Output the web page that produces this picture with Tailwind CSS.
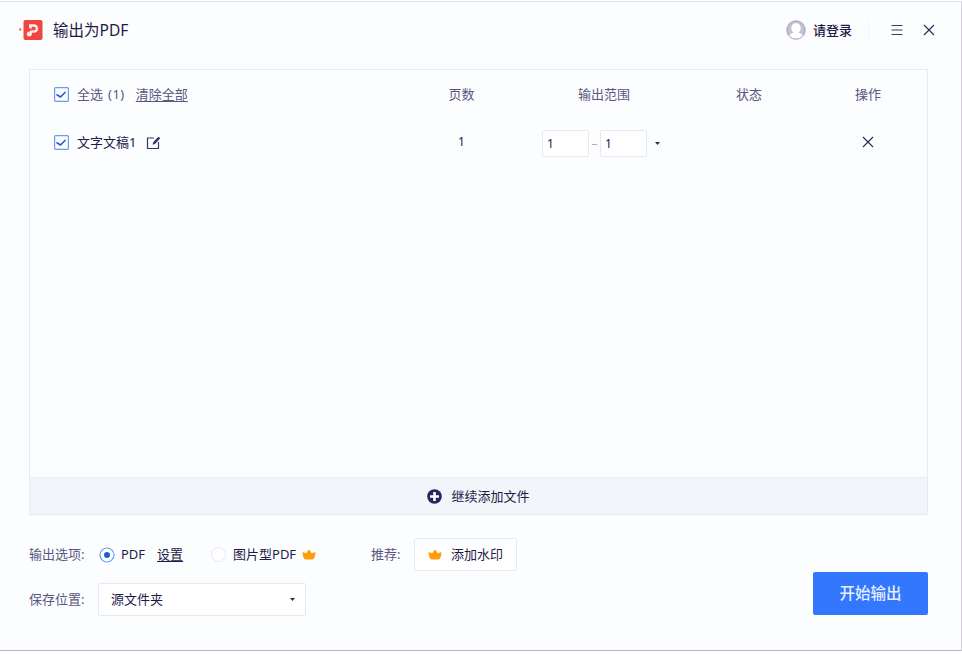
<!DOCTYPE html>
<html lang="zh-CN">
<head>
  <meta charset="UTF-8" />
  <title>输出为PDF</title>
  <meta name="viewport" content="width=device-width, initial-scale=1" />
  <script src="https://cdn.jsdelivr.net/npm/@tailwindcss/browser@4"></script>
</head>
<body class="bg-white overflow-hidden font-['Noto_Sans','Noto_Sans_CJK_SC',sans-serif] text-[13px] leading-none text-[#1f1a47]">
  <div class="w-[962px] h-[650px] mt-px flex flex-col bg-[#fcfdff] border-t border-r border-b border-t-[#dfe7ee] border-r-[#d9cfdc] border-b-[#b4b4c6]">

    <header class="h-[67px] shrink-0 flex items-center pl-[19px] pr-[26px] pb-[11px]">
      <svg class="w-[24px] h-[22px]" viewBox="0 0 24 22" fill="none">
        <circle cx="1.200" cy="10.500" r="1.200" fill="#ee6a60" />
        <rect x="4.500" y="1" width="19" height="20" rx="2" fill="#ee4540" />
        <path d="M10 6.500h5a3 3 0 0 1 0 6h-2.500L11 14.500M11.500 6v3.500" stroke="#ffe9e6" stroke-width="2.500" />
        <circle cx="10.300" cy="15" r="2.500" fill="#ffe9e6" />
      </svg>
      <h1 class="ml-[10px] mt-[2px] text-[15.5px]">输出为PDF</h1>
      <div class="ml-auto flex items-center">
        <svg class="w-5 h-5" viewBox="0 0 20 20" fill="none">
          <circle cx="10" cy="10" r="9.200" fill="#c3c0d3" />
          <path d="M2.500 15.500Q5 12.800 8 12.500h4q3 .3 5.500 3A9 9 0 0 1 2.500 15.500z" fill="#fff" />
          <ellipse cx="10" cy="8.300" rx="4.700" ry="5.300" fill="#fff" />
          <circle cx="10" cy="10" r="9.200" stroke="#a39fba" />
        </svg>
        <span class="ml-[7px] font-medium">请登录</span>
        <span class="ml-[16px] w-px h-5 bg-[#f3f4f9]"></span>
        <svg class="ml-[22px] w-3 h-3" viewBox="0 0 12 12" stroke="#3d3860" stroke-width="1.1">
          <path d="M.5 1.500h11M.5 6h11M.5 10.500h11" />
        </svg>
        <svg class="ml-[20px] w-3 h-3" viewBox="0 0 12 12" stroke="#2c2750" stroke-width="1.1">
          <path d="M1 1l10 10M11 1L1 11" />
        </svg>
      </div>
    </header>

    <main class="ml-[29px] w-[899px] h-[446px] shrink-0 flex flex-col border border-[#e3ebf3]">
      <div class="h-[48px] pl-6 grid grid-cols-[350px_115px_170px_120px_118px] items-center text-center text-[#5b5680]">
        <div class="flex items-center">
          <svg class="w-[15px] h-[15px]" viewBox="0 0 15 15" fill="none">
            <rect x=".6" y=".6" width="13.800" height="13.800" rx="1" fill="#fafcff" stroke="#6c9bf0" stroke-width="1.2" />
            <path d="M2.500 7.500l4 2.500L11.500 5" stroke="#2a55c4" stroke-width="1.5" />
          </svg>
          <span class="ml-2">全选</span>
          <span class="ml-[5px] tracking-[.5px]">(1)</span>
          <a class="ml-[11px] underline underline-offset-2">清除全部</a>
        </div>
        <div>页数</div>
        <div>输出范围</div>
        <div>状态</div>
        <div>操作</div>
      </div>

      <div class="h-[48px] pl-6 grid grid-cols-[350px_115px_170px_120px_118px] items-center text-center">
        <div class="flex items-center">
          <svg class="w-[15px] h-[15px]" viewBox="0 0 15 15" fill="none">
            <rect x=".6" y=".6" width="13.800" height="13.800" rx="1" fill="#fafcff" stroke="#6c9bf0" stroke-width="1.2" />
            <path d="M2.500 7.500l4 2.500L11.500 5" stroke="#2a55c4" stroke-width="1.5" />
          </svg>
          <span class="ml-2">文字文稿1</span>
          <svg class="ml-[10px] mt-[2px] w-[15px] h-[14px]" viewBox="0 0 15 14" fill="none" stroke="#3a3560" stroke-width="1.2">
            <path d="M8 2H1.500v10.500h11V6" />
            <path d="M7 8.500l1.500-3L12 2" />
            <path d="M8 7.500l5.500-6" stroke-width="2.200" />
          </svg>
        </div>
        <div class="text-xs">1</div>
        <div class="flex items-center pl-[23px] pt-[3px] text-xs text-left">
          <span class="w-[47px] h-[27px] pl-1 flex items-center bg-white border border-[#e3eaf1] rounded-xs">1</span>
          <span class="w-[11px] text-center text-[#a9acbf]">–</span>
          <span class="w-[47px] h-[27px] pl-1 flex items-center bg-white border border-[#e3eaf1] rounded-xs">1</span>
          <svg class="ml-2 w-[5px] h-[3px]" viewBox="0 0 5 3" fill="#2e2a55"><path d="M0 0h5L2.500 3z" /></svg>
        </div>
        <div></div>
        <div class="flex justify-center">
          <svg class="w-3 h-3" viewBox="0 0 12 12" stroke="#2c2750" stroke-width="1.1">
            <path d="M1 1l10 10M11 1L1 11" />
          </svg>
        </div>
      </div>

      <button class="mt-auto h-[37px] flex items-center justify-center bg-[#f2f5f9] border-t border-[#e9eef4]">
        <svg class="w-[15px] h-[15px]" viewBox="0 0 15 15">
          <circle cx="7.500" cy="7.500" r="7.300" fill="#28265a" />
          <path d="M7.500 3v9M3 7.500h9" stroke="#fff" stroke-width="2.600" />
        </svg>
        <span class="ml-[9px]">继续添加文件</span>
      </button>
    </main>

    <footer class="flex-1 pl-[29px] pr-[33px] flex justify-between">
      <div class="pt-[23px]">
        <div class="h-[33px] flex items-center">
          <span class="w-[70px] text-[#5b5680]">输出选项:</span>
          <svg class="w-4 h-4" viewBox="0 0 16 16">
            <circle cx="8" cy="8" r="7" fill="#fff" stroke="#6c9bf0" stroke-width="1.2" />
            <circle cx="8" cy="8" r="3" fill="#1f5be0" />
          </svg>
          <span class="ml-[6px] w-[36px]">PDF</span>
          <a class="underline underline-offset-2">设置</a>
          <span class="ml-[28px] w-[15px] h-[15px] rounded-full border border-[#dfe7f0] bg-white"></span>
          <span class="ml-[7px] w-[65px] whitespace-nowrap">图片型PDF</span>
          <svg class="ml-[4px] w-[14px] h-[11px]" viewBox="0 0 14 11" fill="#ff9d0a">
            <path d="M.8 3.800L4.600 4.600 7 1l2.400 3.600 3.800-.8-1.400 5.200q-.3 1-1.300 1h-7q-1 0-1.300-1z" stroke="#ff9d0a" stroke-linejoin="round" />
          </svg>
          <span class="ml-[55px] w-[43px] text-[#5b5680]">推荐:</span>
          <button class="w-[103px] h-[33px] flex items-center pl-[13px] bg-white border border-[#e3eaf1] rounded-xs">
            <svg class="w-[14px] h-[11px]" viewBox="0 0 14 11" fill="#ff9d0a">
              <path d="M.8 3.800L4.600 4.600 7 1l2.400 3.600 3.800-.8-1.400 5.200q-.3 1-1.300 1h-7q-1 0-1.300-1z" stroke="#ff9d0a" stroke-linejoin="round" />
            </svg>
            <span class="ml-[9px]">添加水印</span>
          </button>
        </div>
        <div class="mt-[12px] h-[33px] flex items-center">
          <span class="w-[69px] text-[#5b5680]">保存位置:</span>
          <div class="w-[208px] h-[33px] flex items-center justify-between pl-[12px] pr-[10px] bg-white border border-[#e3eaf1] rounded-xs">
            <span>源文件夹</span>
            <svg class="w-[5px] h-[3px]" viewBox="0 0 5 3" fill="#2e2a55"><path d="M0 0h5L2.500 3z" /></svg>
          </div>
        </div>
      </div>
      <button class="mt-[57px] w-[115px] h-[43px] rounded-xs bg-[#3377ff] text-[#e6efff] text-[15.500px] font-medium">开始输出</button>
    </footer>
  </div>
</body>
</html>
